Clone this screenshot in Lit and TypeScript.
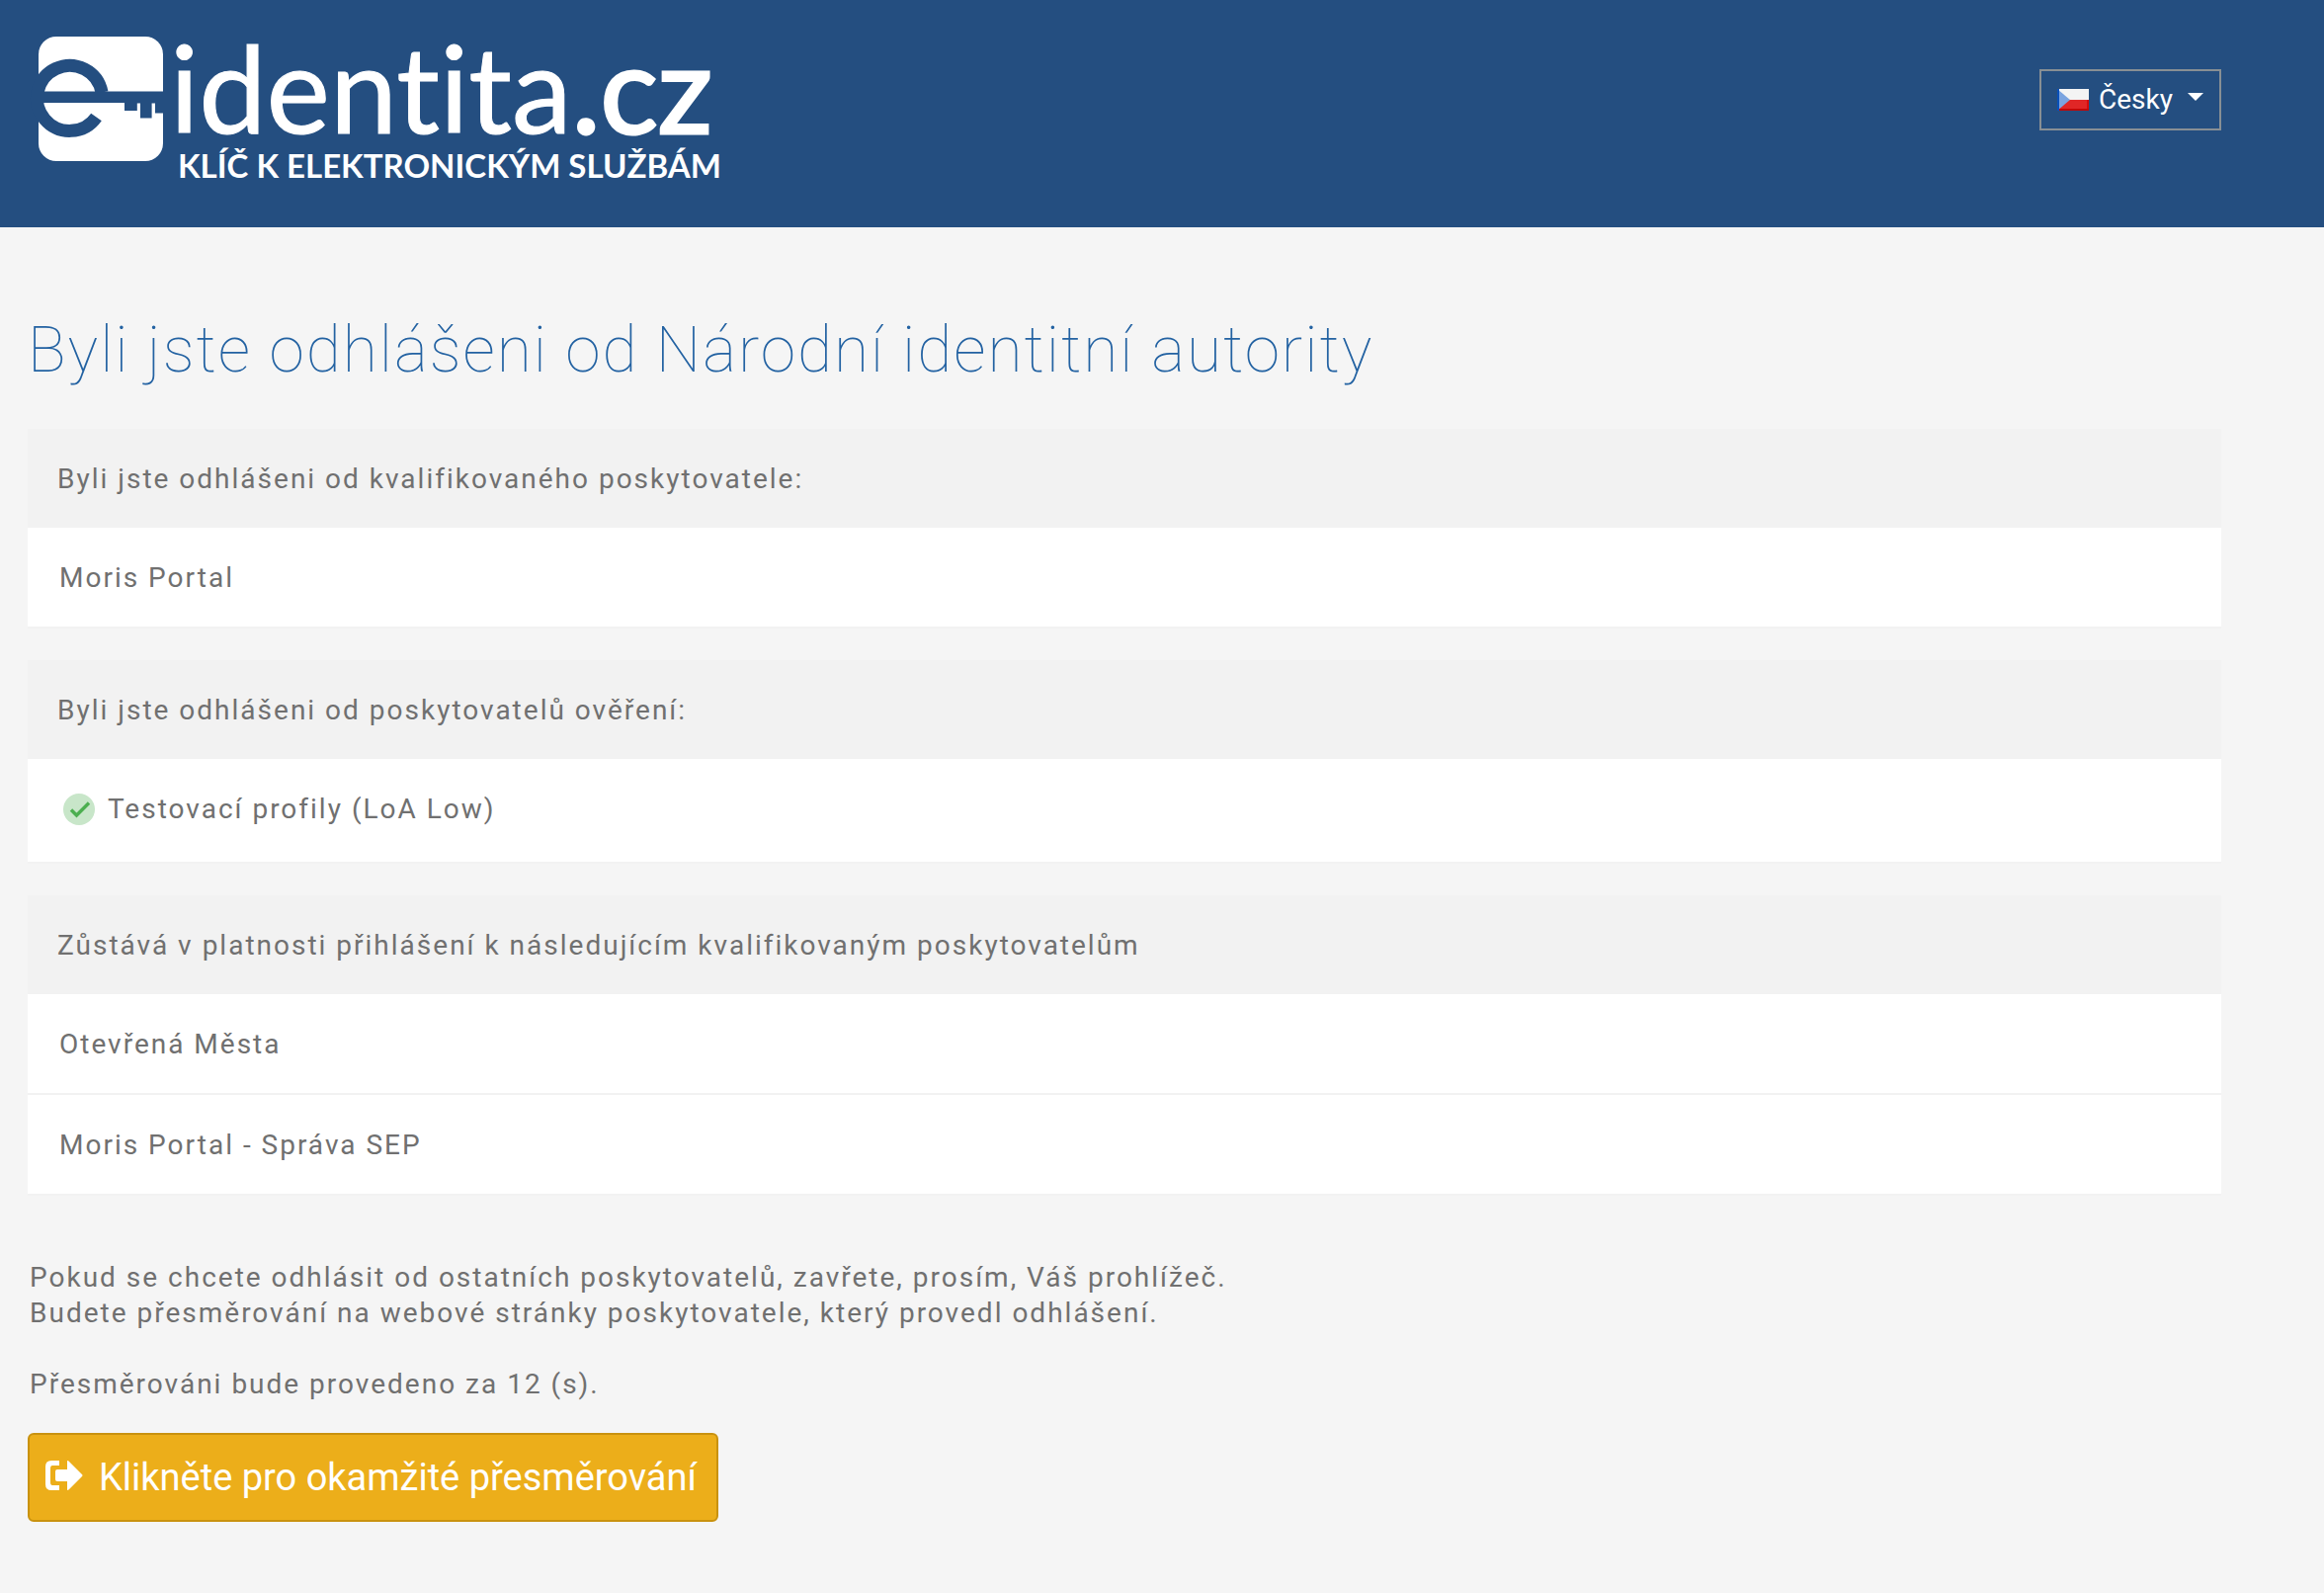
import { LitElement, html, css } from "lit";
import { customElement, property, state } from "lit/decorators.js";

interface Provider {
  name: string;
  confirmed?: boolean;
}

interface ProviderGroup {
  title: string;
  providers: Provider[];
}

const GROUPS: ProviderGroup[] = [
  {
    title: "Byli jste odhlášeni od kvalifikovaného poskytovatele:",
    providers: [{ name: "Moris Portal" }],
  },
  {
    title: "Byli jste odhlášeni od poskytovatelů ověření:",
    providers: [{ name: "Testovací profily (LoA Low)", confirmed: true }],
  },
  {
    title: "Zůstává v platnosti přihlášení k následujícím kvalifikovaným poskytovatelům",
    providers: [{ name: "Otevřená Města" }, { name: "Moris Portal - Správa SEP" }],
  },
];

@customElement("site-logo")
export class SiteLogo extends LitElement {
  static styles = css`
    :host { display: block; }
    .logo { display: block; width: 700px; height: 160px; overflow: visible; }
    .name {
      font: 400 122px Lato, sans-serif; font-variant-ligatures: none;
      fill: #fff; stroke: #fff; stroke-width: 1px;
    }
    .domain { stroke-width: 3px; }
    .claim { font: 700 33px Lato, sans-serif; fill: #fff; }
  `;

  render() {
    return html`
      <svg class="logo" viewBox="0 0 700 160" role="img" aria-label="e-identita.cz">
        <rect x="11" y="5" width="126" height="126" rx="18" fill="#fff" />
        <path
          d="M75 61.5 A33 33 0 1 0 69.5 86.4"
          fill="none" stroke="#244e80" stroke-width="13"
        />
        <path fill="#244e80" d="M10 60.5H138V82.5H129V72.5H125.6V87.5H114V72.5H110.8V80H98V72H10Z" />
        <text class="name" x="144" y="103">identita<tspan class="domain">.cz</tspan></text>
        <text class="claim" x="152" y="148">KLÍČ K ELEKTRONICKÝM SLUŽBÁM</text>
      </svg>
    `;
  }
}

@customElement("language-menu")
export class LanguageMenu extends LitElement {
  static styles = css`
    :host { display: block; }
    .toggle {
      display: flex; align-items: center; box-sizing: border-box; height: 62px;
      padding: 0 16px; border: 2px solid #888f94; background: transparent;
      color: #fff; font: 400 28px/36px Roboto, sans-serif; cursor: pointer;
    }
    .flag { width: 32px; height: 22px; margin-right: 10px; }
    .caret { width: 16px; height: 8px; margin: 0 0 6px 15px; fill: #fff; }
  `;

  render() {
    return html`
      <button class="toggle" type="button" aria-haspopup="true">
        <svg class="flag" viewBox="0 0 32 22" aria-hidden="true">
          <rect width="32" height="11" fill="#f4f4f4" />
          <rect y="11" width="32" height="11" fill="#d80a0a" />
          <path d="M2 11H30V20H2Z" fill="#e02626" />
          <path d="M0 0L13 11L0 22Z" fill="#7ba4e0" />
          <path d="M0 0H2V22H0Z" fill="#0a50b8" />
          <path d="M2 20H32V22H2Z" fill="#c00808" />
        </svg>
        <span>Česky</span>
        <svg class="caret" viewBox="0 0 16 8" aria-hidden="true"><path d="M0 0H16L8 8Z" /></svg>
      </button>
    `;
  }
}

@customElement("provider-panel")
export class ProviderPanel extends LitElement {
  @property({ attribute: false }) group!: ProviderGroup;

  static styles = css`
    :host { display: block; }
    .title {
      margin: 0; padding: 33px 30px 31px; background: #f2f2f2;
      font: inherit; color: #707070;
    }
    .list { margin: 0; padding: 0; list-style: none; }
    .item {
      display: flex; align-items: center; padding: 33px 32px 31px;
      background: #fff; border-bottom: 2px solid #f2f2f2;
    }
    .confirmed { padding-bottom: 35px; }
    .check { width: 32px; height: 32px; margin: 0 13px 0 4px; }
  `;

  render() {
    return html`
      <section>
        <h2 class="title">${this.group.title}</h2>
        <ul class="list">
          ${this.group.providers.map(
            (p) => html`
              <li class="item ${p.confirmed ? "confirmed" : ""}">
                ${p.confirmed
                  ? html`<svg class="check" viewBox="0 0 32 32" aria-hidden="true">
                      <circle cx="16" cy="16" r="16" fill="#c8e6c9" />
                      <path d="M8 16.5L13.5 22L26 9.5" fill="none" stroke="#4caf50" stroke-width="3.4" />
                    </svg>`
                  : null}
                <span>${p.name}</span>
              </li>
            `
          )}
        </ul>
      </section>
    `;
  }
}

@customElement("app-root")
export class AppRoot extends LitElement {
  @state() private seconds = 12;

  static styles = css`
    :host {
      display: block; min-height: 100vh; background: #f5f5f5; color: #707070;
      font: 400 28px/36px Roboto, sans-serif; letter-spacing: 2px;
    }
    .bar {
      display: flex; justify-content: space-between; align-items: flex-start;
      box-sizing: border-box; min-height: 230px; padding: 32px 104px 0 28px;
      background: #244e80; letter-spacing: 0;
    }
    .language { margin-top: 38px; }
    .content { padding: 89px 104px 72px 28px; }
    .heading {
      margin: 0 0 43px; color: #2362a2;
      font: 100 64px/72px Roboto, sans-serif;
    }
    .panels { display: flex; flex-direction: column; gap: 32px; }
    .notice { margin: 65px 0 0; padding-left: 2px; }
    .countdown { margin: 36px 0 31px; padding-left: 2px; }
    .redirect {
      display: inline-flex; align-items: center; gap: 16px;
      box-sizing: border-box; height: 90px; padding: 0 20px 0 16px;
      border: 2px solid #c9920f; border-radius: 6px; background: #ecae1a;
      color: #fff; font: 400 38px/50px Roboto, sans-serif; cursor: pointer;
    }
    .leave { width: 38px; height: 30px; margin-bottom: 4px; fill: #fff; }
  `;

  render() {
    return html`
      <header class="bar">
        <site-logo></site-logo>
        <language-menu class="language"></language-menu>
      </header>
      <main class="content">
        <h1 class="heading">Byli jste odhlášeni od Národní identitní autority</h1>
        <div class="panels">
          ${GROUPS.map((g) => html`<provider-panel .group=${g}></provider-panel>`)}
        </div>
        <p class="notice">
          Pokud se chcete odhlásit od ostatních poskytovatelů, zavřete, prosím, Váš prohlížeč.<br />
          Budete přesměrování na webové stránky poskytovatele, který provedl odhlášení.
        </p>
        <p class="countdown">Přesměrováni bude provedeno za ${this.seconds} (s).</p>
        <button class="redirect" type="button">
          <svg class="leave" viewBox="0 0 38 30" aria-hidden="true">
            <path d="M14 0V5H7Q5 5 5 8V22Q5 25 7 25H14V30H6Q0 30 0 24V6Q0 0 6 0Z" />
            <path d="M22 1Q22 -1 24 1L37 14Q38 15 37 16L24 29Q22 31 22 29V21H12Q10 21 10 19V11Q10 9 12 9H22Z" />
          </svg>
          <span>Klikněte pro okamžité přesměrování</span>
        </button>
      </main>
    `;
  }
}
